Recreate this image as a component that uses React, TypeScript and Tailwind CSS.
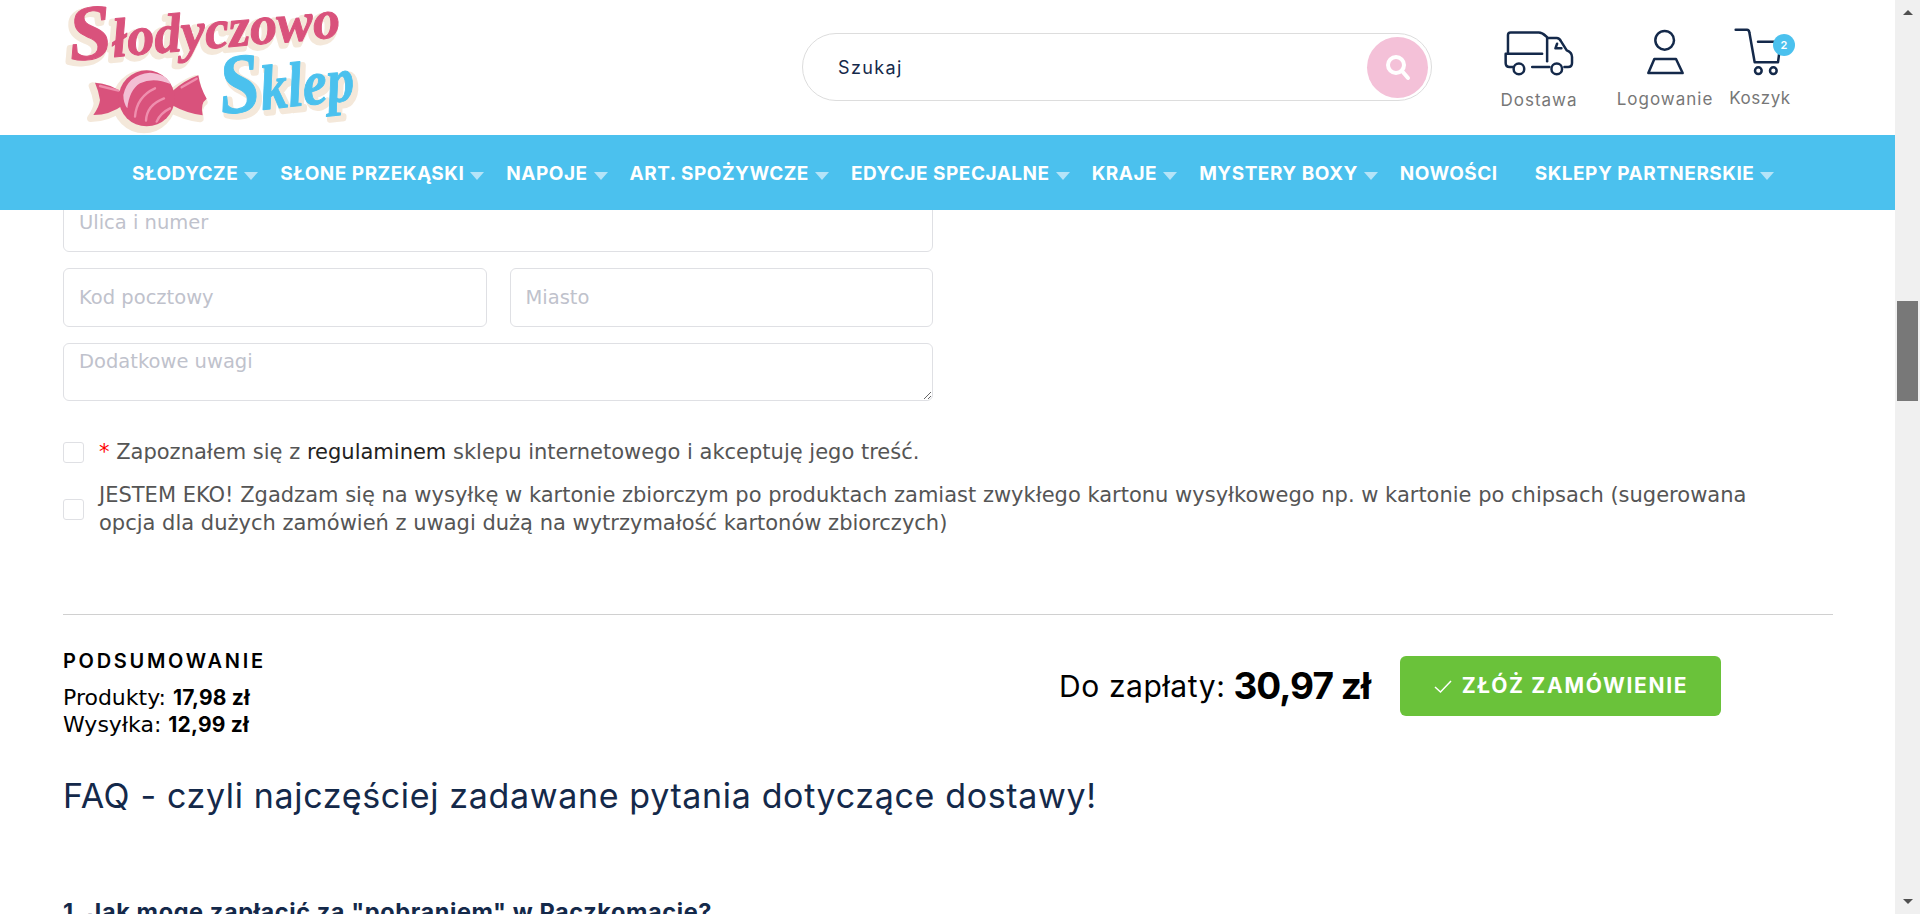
import React from "react";

const navItems: [string, boolean][] = [
  ["SŁODYCZE", true],
  ["SŁONE PRZEKĄSKI", true],
  ["NAPOJE", true],
  ["ART. SPOŻYWCZE", true],
  ["EDYCJE SPECJALNE", true],
  ["KRAJE", true],
  ["MYSTERY BOXY", true],
  ["NOWOŚCI", false],
  ["SKLEPY PARTNERSKIE", true],
];

function Logo() {
  const serif = "'Liberation Serif', serif";
  const top = (fill: string, stroke: string, sw: number, dx: number, dy: number) => (
    <text
      transform={`translate(${92 + dx} ${182 + dy}) rotate(-5)`}
      fontFamily={serif}
      fontStyle="italic"
      fontWeight="700"
      fill={fill}
      stroke={stroke}
      strokeWidth={sw}
      strokeLinejoin="round"
      textLength={815}
      lengthAdjust="spacingAndGlyphs"
    >
      <tspan fontSize="235">S</tspan>
      <tspan fontSize="165">łodyczowo</tspan>
    </text>
  );
  const sklep = (fill: string, stroke: string, sw: number, dx: number, dy: number) => (
    <text
      transform={`translate(${545 + dx} ${342 + dy}) rotate(-6)`}
      fontFamily={serif}
      fontStyle="italic"
      fontWeight="700"
      fill={fill}
      stroke={stroke}
      strokeWidth={sw}
      strokeLinejoin="round"
      textLength={405}
      lengthAdjust="spacingAndGlyphs"
    >
      <tspan fontSize="255">S</tspan>
      <tspan fontSize="190">klep</tspan>
    </text>
  );
  const leftWing = "M165 248 Q210 250 250 280 L250 315 Q210 345 160 345 Q178 320 180 300 Q175 270 165 248 Z";
  const rightWing = "M395 275 Q435 240 475 226 Q480 262 500 296 Q480 310 488 346 Q440 340 395 315 Z";
  return (
    <svg width="340" height="135" viewBox="0 0 1020 405" className="block shrink-0">
      {top("#f4e8da", "#f4e8da", 18, -10, 10)}
      {sklep("#f4e8da", "#f4e8da", 18, 10, 10)}
      <g fill="#f4e8da" stroke="#f4e8da" strokeWidth="22" strokeLinejoin="round" transform="translate(-8 10)">
        <circle cx="320" cy="295" r="84" />
        <path d={leftWing} />
        <path d={rightWing} />
      </g>
      {top("#d9527c", "#d9527c", 3, 0, 0)}
      {sklep("#4bc1ee", "#4bc1ee", 3, 0, 0)}
      <g fill="#d9527c">
        <path d={leftWing} />
        <path d={rightWing} />
        <circle cx="320" cy="295" r="84" />
      </g>
      <path d="M250 285 Q262 225 330 218 Q380 222 392 252 Q340 230 300 250 Q268 270 262 325 Q250 310 250 285 Z" fill="#f3bfd4" />
      <g fill="none" stroke="#ef8fae" strokeWidth="7" strokeLinecap="round">
        <path d="M285 350 Q290 290 345 265" />
        <path d="M318 362 Q320 315 372 295" />
        <path d="M350 365 Q360 340 390 325" />
        <path d="M180 258 L235 272" />
        <path d="M425 262 L470 236" />
      </g>
    </svg>
  );
}

function TruckIcon() {
  return (
    <svg width="73" height="50" viewBox="100 55 220 150" fill="none" stroke="#14294a" strokeWidth="7.5" strokeLinecap="round" strokeLinejoin="round" className="block">
      <path d="M115 130 V76 Q115 68 123 68 H208 Q218 68 228 78 L236 85 H262 Q270 85 275 95 L292 122 Q308 128 308 142 V160 Q308 172 296 172 H285" />
      <path d="M133 172 H120 Q108 172 108 160 V132 H218" />
      <path d="M188 172 H240" />
      <path d="M233 85 V155" />
      <path d="M263 102 L258 116 H276" />
      <circle cx="148" cy="178" r="16" />
      <circle cx="262" cy="178" r="16" />
    </svg>
  );
}

function UserIcon() {
  return (
    <svg width="40" height="50" viewBox="525 55 120 150" fill="none" stroke="#14294a" strokeWidth="7.5" strokeLinejoin="round" className="block">
      <circle cx="584" cy="92" r="28" />
      <path d="M553 148 H618 L638 190 H535 Z" />
    </svg>
  );
}

function CartIcon() {
  return (
    <svg width="50" height="50" viewBox="790 55 150 150" fill="none" stroke="#14294a" strokeWidth="7.5" strokeLinecap="round" strokeLinejoin="round" className="block">
      <path d="M798 60 H832 Q838 60 839 68 L855 158 H925 L930 120" />
      <path d="M865 96 H915" />
      <circle cx="866" cy="183" r="10" />
      <circle cx="911" cy="183" r="10" />
    </svg>
  );
}

export default function App() {
  return (
    <div className="flex h-[914px] w-full overflow-hidden bg-white font-['Inter',sans-serif]">
      <div className="flex min-w-0 flex-1 flex-col">
        <header className="flex h-[135px] shrink-0 items-start overflow-hidden pl-[40px]">
          <Logo />
          <div className="ml-[422px] mt-[33px] flex h-[68px] w-[630px] shrink-0 items-center rounded-full border border-[#dddddd] pl-[35px] pr-[3px]">
            <span className="flex-1 text-[18px] tracking-[1.4px] text-[#14294a]">Szukaj</span>
            <div className="flex h-[61px] w-[61px] items-center justify-center rounded-full bg-[#f4c1d8]">
              <svg width="28" height="28" viewBox="0 0 28 28" fill="none" stroke="#ffffff" strokeWidth="4" strokeLinecap="round">
                <circle cx="12" cy="12" r="8" />
                <path d="M18 18 L24 25" />
              </svg>
            </div>
          </div>
          <div className="ml-[67px] mt-[28px] flex w-[80px] shrink-0 flex-col items-center">
            <TruckIcon />
            <span className="mt-[10px] text-[17px] leading-[24px] tracking-[1px] text-[#777777]">Dostawa</span>
          </div>
          <div className="ml-[37px] mt-[28px] flex w-[98px] shrink-0 flex-col items-center">
            <UserIcon />
            <span className="mt-[9px] text-[17px] leading-[24px] tracking-[1px] text-[#777777]">Logowanie</span>
          </div>
          <div className="relative ml-[16px] mt-[28px] flex w-[60px] shrink-0 flex-col items-center">
            <div className="self-start pl-[3px]">
              <CartIcon />
            </div>
            <span className="absolute left-[43px] top-[6px] flex h-[22px] w-[22px] items-center justify-center rounded-full bg-[#4bc1ee] text-[11px] font-semibold text-white">2</span>
            <span className="mt-[8px] text-[17px] leading-[24px] tracking-[0.5px] text-[#777777]">Koszyk</span>
          </div>
        </header>

        <nav className="flex h-[75px] shrink-0 items-center gap-[22px] bg-[#4bc1ee] pl-[132px] pt-[3px]">
          {navItems.map(([label, arrow]) => (
            <div key={label} className={arrow ? "flex items-center gap-[6px]" : "mr-[15px] flex items-center"}>
              <span className="whitespace-nowrap text-[19px] font-bold tracking-[0.5px] text-white">{label}</span>
              {arrow && <span className="mt-[3px] h-0 w-0 border-x-[7px] border-t-[8px] border-x-transparent border-t-[#b5e4f8]" />}
            </div>
          ))}
        </nav>

        <main className="flex min-h-0 flex-1 flex-col overflow-hidden pl-[63px] pr-[62px] font-['DejaVu_Sans',sans-serif]">
          <div className="flex h-[42px] w-[870px] shrink-0 items-end overflow-hidden">
            <input
              placeholder="Ulica i numer"
              className="h-[59px] w-full shrink-0 rounded-[6px] border border-[#dfe0e4] px-[15px] text-[19.5px] placeholder:text-[#bfc2cc]"
            />
          </div>
          <div className="mt-[16px] flex w-[870px] shrink-0 gap-[23px]">
            <input
              placeholder="Kod pocztowy"
              className="h-[59px] min-w-0 flex-1 rounded-[6px] border border-[#dfe0e4] px-[15px] text-[19.5px] placeholder:text-[#bfc2cc]"
            />
            <input
              placeholder="Miasto"
              className="h-[59px] min-w-0 flex-1 rounded-[6px] border border-[#dfe0e4] px-[15px] text-[19.5px] placeholder:text-[#bfc2cc]"
            />
          </div>
          <textarea
            placeholder="Dodatkowe uwagi"
            className="mt-[16px] block h-[58px] w-[870px] shrink-0 resize-y rounded-[6px] border border-[#dfe0e4] px-[15px] py-[3px] text-[19.5px] placeholder:text-[#bfc2cc]"
          />

          <label className="mt-[37px] flex items-center gap-[15px] text-[21px] leading-[28px] text-[#555555]">
            <input type="checkbox" className="h-[21px] w-[21px] shrink-0 appearance-none rounded-[3px] border border-[#dfe0e4]" />
            <span>
              <span className="text-[#ff0000]">*</span> Zapoznałem się z <span className="text-[#222222]">regulaminem</span> sklepu internetowego i akceptuję jego treść.
            </span>
          </label>
          <label className="mt-[15px] flex items-center gap-[15px] text-[21px] leading-[28px] text-[#555555]">
            <input type="checkbox" className="h-[21px] w-[21px] shrink-0 appearance-none rounded-[3px] border border-[#dfe0e4]" />
            <span className="whitespace-nowrap">
              JESTEM EKO! Zgadzam się na wysyłkę w kartonie zbiorczym po produktach zamiast zwykłego kartonu wysyłkowego np. w kartonie po chipsach (sugerowana
              <br />
              opcja dla dużych zamówień z uwagi dużą na wytrzymałość kartonów zbiorczych)
            </span>
          </label>

          <div className="mt-[77px] flex h-[104px] shrink-0 border-t border-[#d0d0d0]">
            <div className="w-[400px] pt-[32px] text-black">
              <div className="font-['Inter',sans-serif] text-[20px] font-semibold leading-[28px] tracking-[2.7px]">PODSUMOWANIE</div>
              <div className="mt-[9px] text-[22px] leading-[27px]">
                Produkty: <b className="font-['Inter',sans-serif] text-[21px] font-bold tracking-[0.2px]">17,98 zł</b>
              </div>
              <div className="text-[22px] leading-[27px]">
                Wysyłka: <b className="font-['Inter',sans-serif] text-[21px] font-bold tracking-[0.2px]">12,99 zł</b>
              </div>
            </div>
            <div className="ml-[596px] flex items-start pt-[41px] font-['Inter',sans-serif]">
              <div className="flex h-[60px] w-[341px] items-center whitespace-nowrap text-black">
                <span className="text-[30px] tracking-[0.6px]">Do zapłaty:</span>
                <span className="ml-[8px] text-[37px] font-bold tracking-[-1px]">30,97 zł</span>
              </div>
              <button className="flex h-[60px] w-[321px] items-center justify-center gap-[9px] rounded-[6px] bg-[#6ac23a] text-[21px] font-bold tracking-[1.7px] text-white">
                <svg width="20" height="20" viewBox="0 0 20 20" fill="none" stroke="#ffffff" strokeWidth="1.5">
                  <path d="M2 11 L7.5 16 L18 5" />
                </svg>
                ZŁÓŻ ZAMÓWIENIE
              </button>
            </div>
          </div>

          <h2 className="mt-[54px] shrink-0 whitespace-nowrap font-['Inter',sans-serif] text-[34px] font-normal leading-[48px] tracking-[0.65px] text-[#14294a]">FAQ - czyli najczęściej zadawane pytania dotyczące dostawy!</h2>
          <div className="mt-[77px] shrink-0 whitespace-nowrap font-['Inter',sans-serif] text-[23.5px] font-bold leading-[30px] tracking-[0.6px] text-[#14294a]">1. Jak mogę zapłacić za "pobraniem" w Paczkomacie?</div>
        </main>
      </div>

      <aside className="flex w-[25px] shrink-0 flex-col items-center bg-[#f0f0f0]">
        <span className="mt-[10px] h-0 w-0 border-x-[5.5px] border-b-[5px] border-x-transparent border-b-[#505050]" />
        <div className="mt-[286px] h-[100px] w-[21px] bg-[#787878]" />
        <div className="flex-1" />
        <span className="mb-[10px] h-0 w-0 border-x-[5.5px] border-t-[5px] border-x-transparent border-t-[#505050]" />
      </aside>
    </div>
  );
}
